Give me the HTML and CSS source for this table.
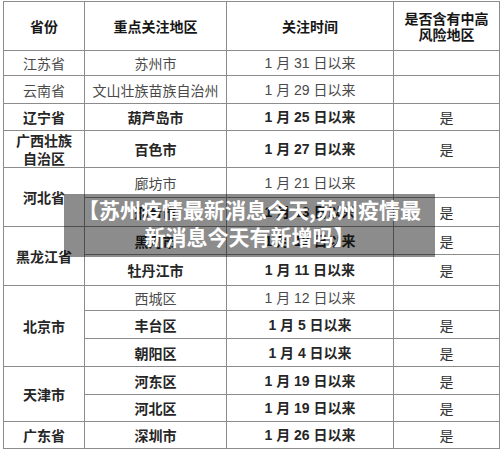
FILE: index.html
```html
<!DOCTYPE html>
<html lang="zh-CN">
<head>
<meta charset="utf-8">
<title>苏州疫情最新消息</title>
<link rel="stylesheet" href="styles.css">
</head>
<body>
<div class="page">
  <table class="tbl">
    <colgroup><col class="c1"><col class="c2"><col class="c3"><col class="c4"></colgroup>
    <tr class="rh"><th>省份</th><th>重点关注地区</th><th>关注时间</th><th class="two">是否含有中高<br>风险地区</th></tr>
    <tr class="h25 n"><td>江苏省</td><td>苏州市</td><td class="d">1 月 31 日以来</td><td></td></tr>
    <tr class="h28 n"><td>云南省</td><td>文山壮族苗族自治州</td><td class="d">1 月 29 日以来</td><td></td></tr>
    <tr class="h27 b"><td>辽宁省</td><td>葫芦岛市</td><td class="d">1 月 25 日以来</td><td class="y">是</td></tr>
    <tr class="h36 b"><td>广西壮族<br>自治区</td><td>百色市</td><td class="d">1 月 27 日以来</td><td class="y">是</td></tr>
    <tr class="h30 n"><td rowspan="2" class="bp">河北省</td><td>廊坊市</td><td class="d">1 月 21 日以来</td><td></td></tr>
    <tr class="h29 b"><td>邢台市</td><td class="d">1 月 13 日以来</td><td class="y">是</td></tr>
    <tr class="h28 b"><td rowspan="2">黑龙江省</td><td>黑河市</td><td class="d">1 月 12 日以来</td><td class="y">是</td></tr>
    <tr class="h31 b"><td>牡丹江市</td><td class="d">1 月 11 日以来</td><td class="y">是</td></tr>
    <tr class="h25 n"><td rowspan="3" class="bp">北京市</td><td>西城区</td><td class="d">1 月 12 日以来</td><td></td></tr>
    <tr class="h28 b"><td>丰台区</td><td class="d">1 月 5 日以来</td><td class="y">是</td></tr>
    <tr class="h28 b"><td>朝阳区</td><td class="d">1 月 4 日以来</td><td class="y">是</td></tr>
    <tr class="h28 b"><td rowspan="2">天津市</td><td>河东区</td><td class="d">1 月 19 日以来</td><td class="y">是</td></tr>
    <tr class="h27 b"><td>河北区</td><td class="d">1 月 19 日以来</td><td class="y">是</td></tr>
    <tr class="h27 b"><td>广东省</td><td>深圳市</td><td class="d">1 月 26 日以来</td><td class="y">是</td></tr>
  </table>
  <div class="caption">【苏州疫情最新消息今天,苏州疫情最<br>新消息今天有新增吗】</div>
</div>
</body>
</html>
```
FILE: styles.css
```css
html, body {
  margin: 0;
  padding: 0;
  background: #ffffff;
}

.page {
  position: relative;
  width: 500px;
  height: 451px;
  padding: 1px 0 0 3px;
  box-sizing: border-box;
  font-family: "Noto Sans CJK SC", "Noto Sans", sans-serif;
}

.tbl {
  border-collapse: collapse;
  table-layout: fixed;
  width: 496px;
}

.c1 { width: 81px; }
.c2 { width: 142px; }
.c3 { width: 167px; }
.c4 { width: 106px; }

.tbl th,
.tbl td {
  border: 1px solid #8c8c8c;
  padding: 0;
  text-align: center;
  vertical-align: middle;
  font-size: 14px;
  line-height: 18px;
  overflow: hidden;
}

.tbl th {
  font-weight: 700;
  color: #161616;
}

.tbl th.two {
  line-height: 16px;
}

.rh { height: 49px; }
.h25 { height: 25px; }
.h27 { height: 27px; }
.h28 { height: 28px; }
.h29 { height: 29px; }
.h30 { height: 30px; }
.h31 { height: 31px; }
.h36 { height: 36px; }

.n td {
  font-weight: 400;
  color: #4a4a4a;
}

.b td {
  font-weight: 700;
  color: #262626;
}

.n td.bp {
  font-weight: 700;
  color: #262626;
}

.tbl td.d {
  font-family: "Liberation Sans", "Noto Sans CJK SC", sans-serif;
}

.b td.y {
  font-weight: 400;
  color: #333333;
}

.caption {
  position: absolute;
  left: 64px;
  top: 194px;
  width: 371px;
  height: 63px;
  box-sizing: border-box;
  padding: 2px 0 0;
  background: rgba(0, 0, 0, 0.45);
  color: #ffffff;
  font-family: "Noto Sans CJK SC", sans-serif;
  font-weight: 700;
  font-size: 21px;
  line-height: 27px;
  text-align: center;
}
```
